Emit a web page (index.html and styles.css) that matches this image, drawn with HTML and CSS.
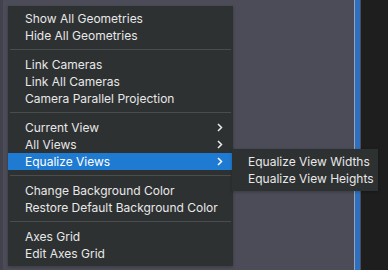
FILE: index.html
```html
<!DOCTYPE html>
<html lang="en">
<head>
    <meta charset="UTF-8">
    <title>View Menu</title>
    <link rel="stylesheet" href="styles.css">
</head>
<body>
    <div class="desktop">
        <div class="edge"></div>
        <div class="canvas"></div>
        <div class="divider"></div>
        <div class="panel"></div>
    </div>

    <div class="menu main-menu">
        <div class="item">Show All Geometries</div>
        <div class="item">Hide All Geometries</div>
        <div class="separator"></div>
        <div class="item">Link Cameras</div>
        <div class="item">Link All Cameras</div>
        <div class="item">Camera Parallel Projection</div>
        <div class="separator"></div>
        <div class="item has-sub">Current View
            <svg class="chevron" width="6" height="9" viewBox="0 0 6 9"><path d="M1 1 L4.5 4.5 L1 8" fill="none" stroke="currentColor" stroke-width="1.5"/></svg>
        </div>
        <div class="item has-sub">All Views
            <svg class="chevron" width="6" height="9" viewBox="0 0 6 9"><path d="M1 1 L4.5 4.5 L1 8" fill="none" stroke="currentColor" stroke-width="1.5"/></svg>
        </div>
        <div class="item has-sub active">Equalize Views
            <svg class="chevron" width="6" height="9" viewBox="0 0 6 9"><path d="M1 1 L4.5 4.5 L1 8" fill="none" stroke="currentColor" stroke-width="1.5"/></svg>
        </div>
        <div class="separator"></div>
        <div class="item">Change Background Color</div>
        <div class="item">Restore Default Background Color</div>
        <div class="separator"></div>
        <div class="item">Axes Grid</div>
        <div class="item">Edit Axes Grid</div>
    </div>

    <div class="menu sub-menu">
        <div class="item">Equalize View Widths</div>
        <div class="item">Equalize View Heights</div>
    </div>
</body>
</html>
```

FILE: styles.css
```css
body {
    margin: 0;
    width: 388px;
    height: 270px;
    overflow: hidden;
    font-family: Inter, "Noto Sans", sans-serif;
    font-size: 12px;
    background-color: #4c4c58;
}
.desktop {
    display: flex;
    height: 270px;
}
.edge {
    width: 3px;
    background-color: #42424e;
}
.canvas {
    flex: 1;
    background-color: #4c4c58;
}
.divider {
    width: 5px;
    border-left: 1px solid #9aa3b4;
    background-color: #2f6fbf;
    margin-right: 1px;
}
.panel {
    width: 27px;
    background-color: #1e1e1f;
}
.menu {
    position: absolute;
    background-color: #2e3132;
    color: #e8e8e8;
    padding: 4px 0;
    box-shadow: 0 1px 3px rgba(0, 0, 0, 0.25);
}
.main-menu {
    left: 8px;
    top: 6px;
    width: 225px;
}
.sub-menu {
    left: 232px;
    top: 149px;
    width: 146px;
}
.item {
    height: 17px;
    line-height: 17px;
    padding-left: 17px;
    display: flex;
    align-items: center;
    white-space: nowrap;
}
.sub-menu .item {
    padding-left: 16px;
}
.has-sub {
    justify-content: space-between;
    padding-right: 10px;
}
.active {
    background-color: #1f7ad2;
    color: #ffffff;
}
.chevron {
    display: block;
}
.separator {
    height: 1px;
    margin: 5px 2px 6px;
    background-color: #4a4d4e;
}
```
